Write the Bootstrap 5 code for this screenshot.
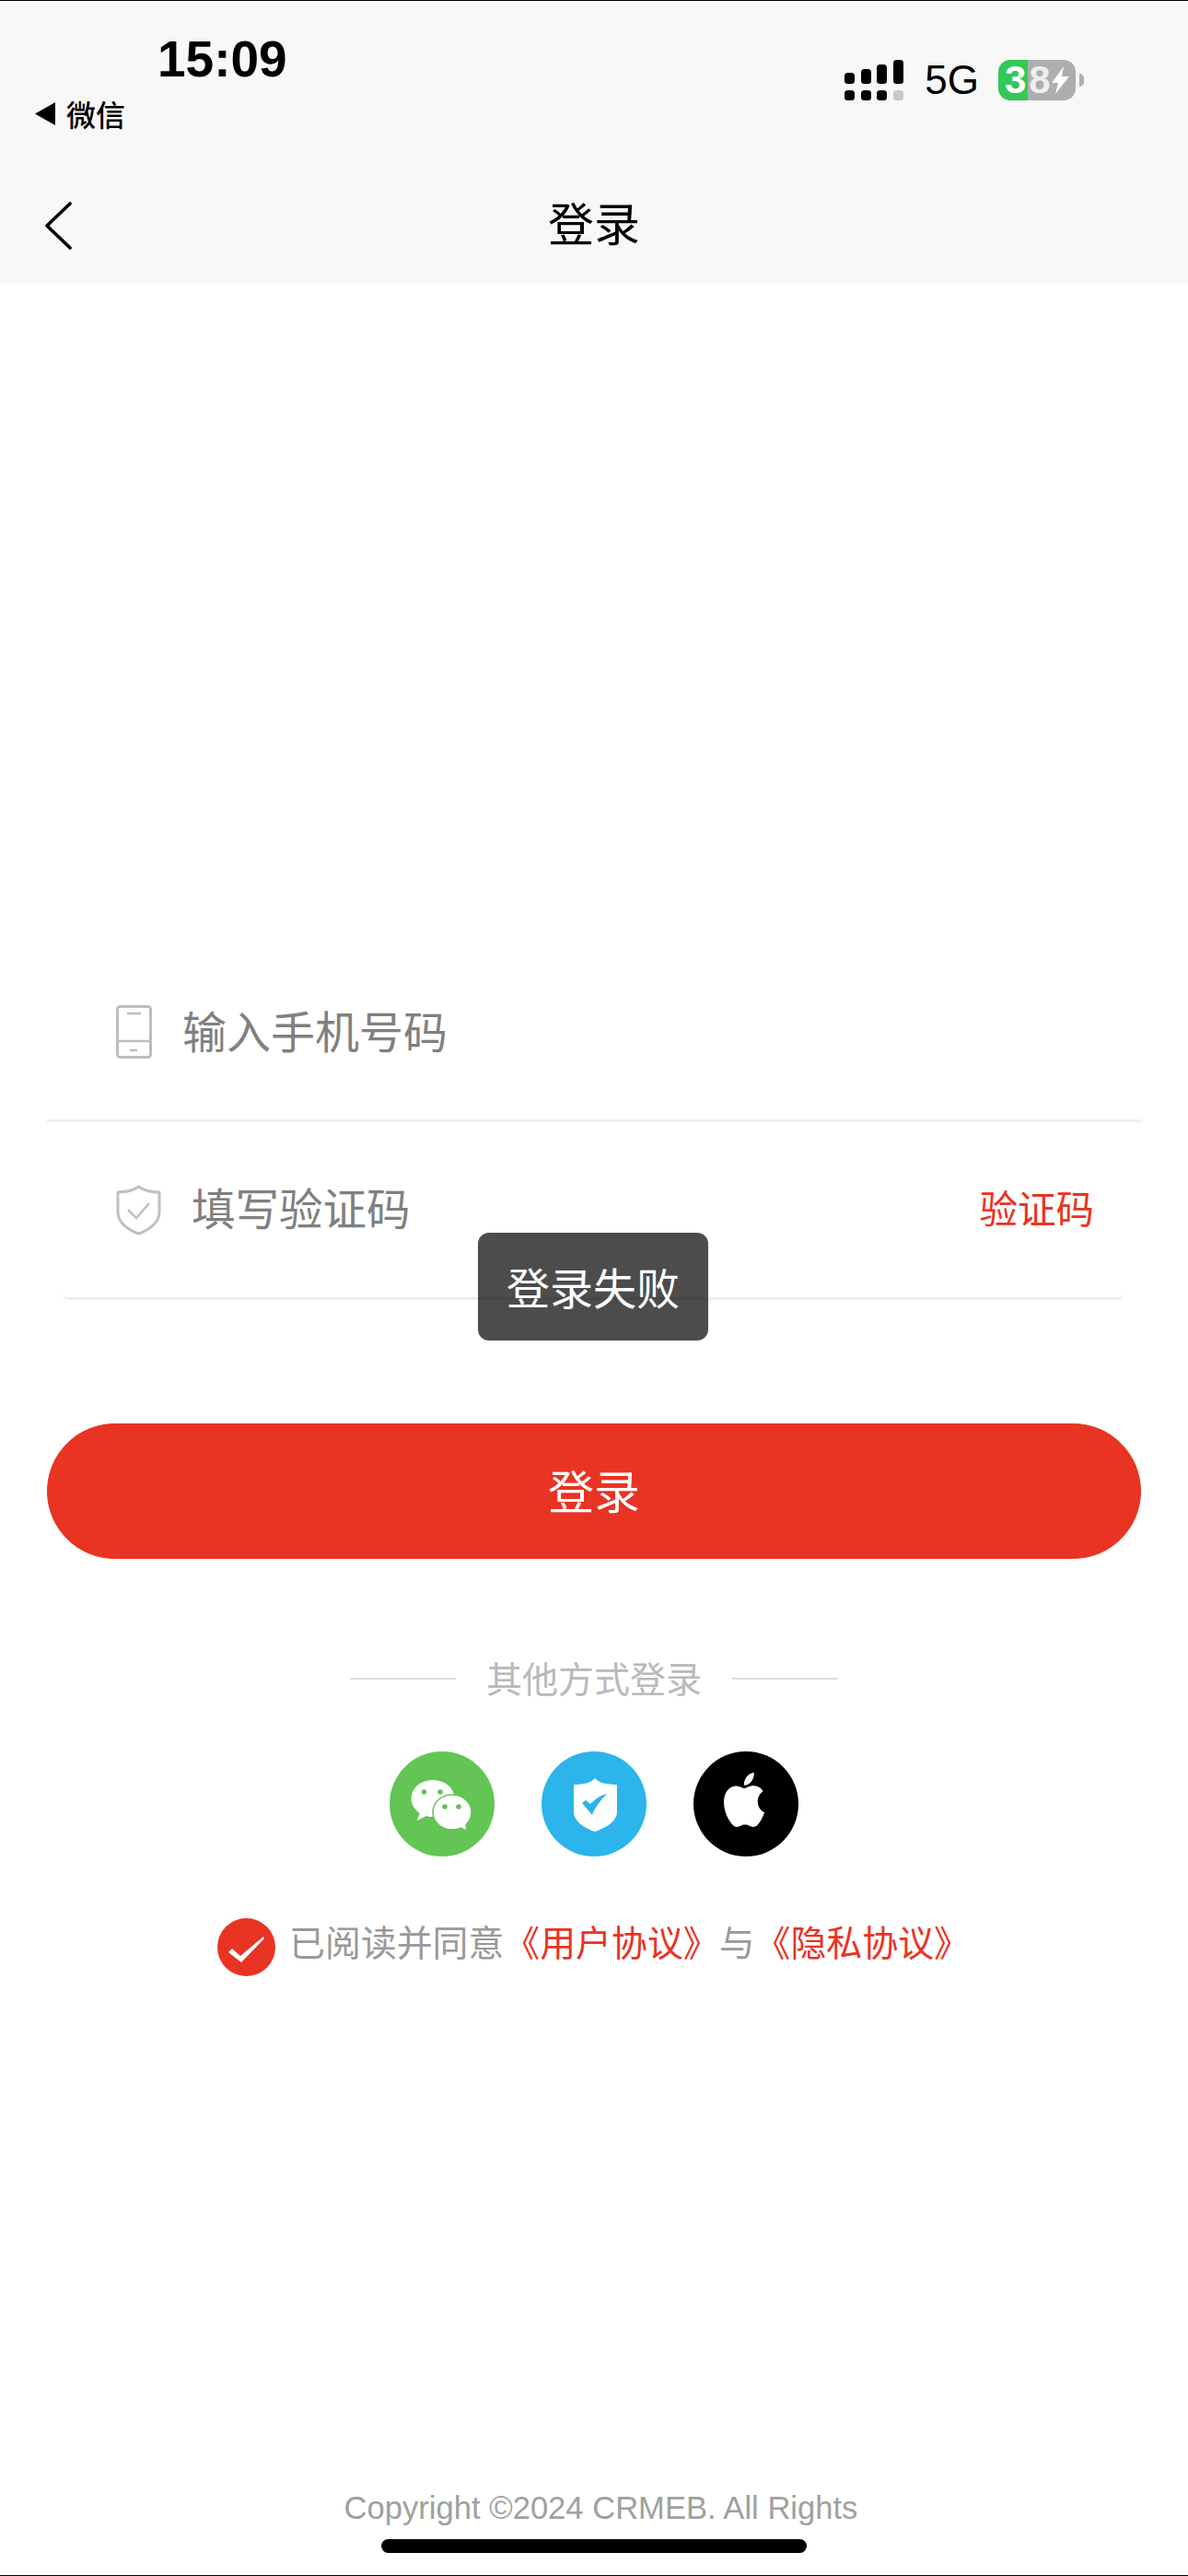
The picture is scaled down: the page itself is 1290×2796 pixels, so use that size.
<!DOCTYPE html>
<html lang="zh-CN">

<head>
    <meta charset="UTF-8">
    <meta name="viewport" content="width=device-width, initial-scale=1.0">
    <title>登录</title>
    <link href="https://cdn.jsdelivr.net/npm/bootstrap@5.3.0/dist/css/bootstrap.min.css" rel="stylesheet">
    <style>
        body {
            background-color: #fff;
            font-family: "Noto Sans CJK SC", "Liberation Sans", sans-serif;
        }

        .login-page {
            width: 1290px;
            height: 2796px;
            border-top: 1px solid #000;
            border-bottom: 1px solid #000;
        }

        .top-head {
            height: 308px;
            background-color: #f8f8f8;
        }

        /* status bar */
        .status-left {
            padding: 36px 0 0 38px;
        }

        .clock {
            margin-left: 133px;
            font: 700 55px/1 "Liberation Sans", sans-serif;
            color: #000;
        }

        .back-app {
            margin-top: 11px;
            font-size: 32px;
            line-height: 40px;
            font-weight: 500;
            color: #000;
        }

        .back-tri {
            width: 22px;
            height: 25px;
            margin-right: 12px;
        }

        .status-right {
            padding: 64px 113px 0 0;
        }

        .signal {
            width: 65px;
            height: 44px;
        }

        .net-text {
            margin: 0 21px 0 22px;
            font: 400 44px/44px "Liberation Sans", sans-serif;
            color: #000;
        }

        .battery-box {
            width: 84px;
            height: 44px;
            margin-right: 9px;
            padding-left: 7px;
            border-radius: 13px;
            background: linear-gradient(90deg, #34c85a 32px, #aeaeae 32px);
            font: 700 42px/44px "Liberation Sans", sans-serif;
            letter-spacing: 3px;
            color: #fff;
        }

        .battery-box::after {
            content: "";
            position: absolute;
            left: 88px;
            top: 15px;
            width: 5px;
            height: 14px;
            background-color: #aeaeae;
            border-radius: 0 5px 5px 0;
        }

        .battery-eight {
            color: #eee;
        }

        .battery-bolt {
            width: 20px;
            height: 30px;
            margin-left: -2px;
        }

        /* nav */
        .nav-line {
            height: 100px;
            margin-top: 47px;
            padding-left: 48px;
        }

        .nav-back {
            width: 30px;
            height: 52px;
            margin-top: 9px;
        }

        .nav-title {
            font-size: 50px;
            line-height: 60px;
            color: #000;
        }

        /* form */
        .login-form {
            margin: 774px 51px 0;
        }

        .field-row {
            height: 135px;
            padding: 0 0 58px 75px;
            border-bottom: 3px solid #efefef;
            color: #808080;
            font-size: 48px;
            line-height: 74px;
        }

        .field-code {
            height: 135px;
            margin: 58px 18px 0 16px;
            padding: 0 33px 58px 59px;
            border-bottom: 3px solid #efefef;
            border-radius: 0 0 8px 8px;
            color: #808080;
            font-size: 47.5px;
            line-height: 74px;
        }

        .field-text {
            margin: -7px 0 0 -2px;
        }

        .field-phone-ico {
            width: 39px;
            height: 58px;
            margin-right: 35px;
        }

        .field-shield-ico {
            width: 49px;
            height: 55px;
            margin-right: 35px;
        }

        .code-btn {
            margin-top: -7px;
            font-size: 41.5px;
            color: #e93323;
        }

        .submit-btn {
            height: 147px;
            margin-top: 134px;
            padding-bottom: 11px;
            background-color: #e93323;
            border-color: #e93323;
            color: #fff;
            font-size: 50px;
        }

        .other-title {
            height: 40px;
            margin-top: 110px;
            color: #b9b9b9;
            font-size: 39px;
            line-height: 40px;
            gap: 33px;
        }

        .other-title span {
            margin-top: -5px;
        }

        .other-title i {
            display: block;
            width: 115px;
            height: 2px;
            background-color: #dcdcdc;
        }

        .other-icons {
            margin-top: 59px;
            gap: 51px;
        }

        .round-ico {
            width: 114px;
            height: 114px;
            display: block;
        }

        .agree-row {
            margin-top: 67px;
            padding-left: 185px;
            font-size: 38.9px;
            line-height: 63px;
            color: #999;
        }

        .agree-text {
            margin: -14px 0 0 -2px;
        }

        .agree-check {
            width: 63px;
            height: 63px;
            margin-right: 17px;
        }

        .agree-link {
            color: #e93323;
        }

        /* bottom */
        .copy-text {
            margin: auto 0 0 15px;
            font: 400 34.6px/40px "Liberation Sans", sans-serif;
            color: #a0a0a0;
        }

        .home-bar {
            width: 462px;
            height: 15px;
            margin: 14px auto 24px;
            background-color: #000;
            border-radius: 8px;
        }

        .toast-msg {
            top: 1337px;
            left: 519px;
            width: 250px;
            height: 117px;
            background-color: rgba(0, 0, 0, .7);
            border-radius: 12px;
            color: #fff;
            font-size: 47px;
        }
    </style>
</head>

<body>
    <div class="login-page position-relative d-flex flex-column overflow-hidden">
        <!-- status bar + nav -->
        <header class="top-head">
            <div class="d-flex justify-content-between">
                <div class="status-left">
                    <div class="clock">15:09</div>
                    <div class="back-app d-flex align-items-center">
                        <svg class="back-tri" viewBox="0 0 22 25"><path d="M0 12.5 22 0v25z" fill="#000" /></svg>
                        微信
                    </div>
                </div>
                <div class="status-right d-flex align-items-start">
                    <svg class="signal" viewBox="0 0 65 44">
                        <rect x="0" y="14" width="11" height="12" rx="3.5" />
                        <rect x="18" y="10" width="11" height="16" rx="3.5" />
                        <rect x="35" y="5" width="11" height="21" rx="3.5" />
                        <rect x="53" y="0" width="11" height="26" rx="3.5" />
                        <rect x="0" y="33" width="11" height="11" rx="3.5" />
                        <rect x="18" y="33" width="11" height="11" rx="3.5" />
                        <rect x="35" y="33" width="11" height="11" rx="3.5" />
                        <rect x="53" y="33" width="11" height="11" rx="3.5" fill="#c8c8c8" />
                    </svg>
                    <span class="net-text">5G</span>
                    <div class="position-relative d-flex align-items-center battery-box">
                        <span>3</span><span class="battery-eight">8</span>
                        <svg class="battery-bolt" viewBox="0 0 20 30"><path d="M13 0 0 18h7L4 30 19 11h-8z" fill="#fff" /></svg>
                    </div>
                </div>
            </div>
            <div class="nav-line position-relative d-flex align-items-center">
                <svg class="nav-back" viewBox="0 0 30 52">
                    <path d="M28 2 3 26l25 24" fill="none" stroke="#000" stroke-width="3.6" stroke-linecap="round" stroke-linejoin="round" />
                </svg>
                <div class="nav-title position-absolute top-50 start-50 translate-middle">登录</div>
            </div>
        </header>

        <!-- login form -->
        <form class="login-form" onsubmit="return false">
            <div class="field-row d-flex align-items-center">
                <svg class="field-phone-ico" viewBox="0 0 39 58">
                    <rect x="1.5" y="1.5" width="36" height="55" rx="3" fill="none" stroke="#bdbdbd" stroke-width="3" />
                    <path d="M2 39h35M12 9h15M15 49h8" fill="none" stroke="#bdbdbd" stroke-width="2.4" />
                </svg>
                <span class="field-text">输入手机号码</span>
            </div>
            <div class="field-code d-flex align-items-center">
                <svg class="field-shield-ico" viewBox="0 0 49 55">
                    <path d="M24.5 2C19 6 11 8 2 8v22c0 11 11 19 22.500 23C36 49 47 41 47 30V8c-9 0-17-2-22.500-6z" fill="none" stroke="#c0c0c0" stroke-width="3" stroke-linejoin="round" />
                    <path d="m13 27 9 9 14-16" fill="none" stroke="#c0c0c0" stroke-width="2.6" />
                </svg>
                <span class="field-text">填写验证码</span>
                <span class="code-btn ms-auto">验证码</span>
            </div>

            <button type="submit" class="submit-btn btn rounded-pill w-100 d-block">登录</button>

            <div class="other-title d-flex align-items-center justify-content-center">
                <i></i><span>其他方式登录</span><i></i>
            </div>

            <div class="other-icons d-flex justify-content-center">
                <svg class="round-ico" viewBox="0 0 114 114">
                    <circle cx="57" cy="57" r="57" fill="#62c554" />
                    <ellipse cx="47" cy="51" rx="23.500" ry="20" fill="#fff" />
                    <path d="M33 66 30 75l10-5z" fill="#fff" />
                    <circle cx="37.500" cy="44" r="2.800" fill="#62c554" />
                    <circle cx="55" cy="44" r="2.800" fill="#62c554" />
                    <ellipse cx="68" cy="66" rx="21" ry="19" fill="#fff" stroke="#62c554" stroke-width="1.500" />
                    <path d="M75 81 83 85l-1-9z" fill="#fff" />
                    <circle cx="60" cy="60" r="2.800" fill="#62c554" />
                    <circle cx="75" cy="60" r="2.800" fill="#62c554" />
                </svg>
                <svg class="round-ico" viewBox="0 0 114 114">
                    <circle cx="57" cy="57" r="57" fill="#2cb4ec" />
                    <path d="M58 29c-4 5-12 7-23 7v30c0 10 13 18 23 21 10-3 24-11 24-21V36c-12 0-20-2-24-7z" fill="#fff" />
                    <path d="m44 56 4-3 5 4c5-5 12-10 18-11-7 7-13 15-16 23z" fill="#2cb4ec" />
                </svg>
                <svg class="round-ico" viewBox="0 0 114 114">
                    <circle cx="57" cy="57" r="57" fill="#000" />
                    <g transform="translate(28 23) scale(2.250 2.460)">
                        <path d="M12.152 6.896c-.948 0-2.415-1.078-3.960-1.040-2.040.027-3.910 1.183-4.961 3.014-2.117 3.675-.546 9.103 1.519 12.090 1.013 1.454 2.208 3.090 3.792 3.039 1.520-.065 2.090-.987 3.935-.987 1.831 0 2.350.987 3.960.948 1.637-.026 2.676-1.480 3.676-2.948 1.156-1.688 1.636-3.325 1.662-3.415-.039-.013-3.182-1.221-3.220-4.857-.026-3.040 2.480-4.494 2.597-4.559-1.429-2.090-3.623-2.324-4.390-2.376-2-.156-3.675 1.090-4.610 1.090zM15.530 3.830c.843-1.012 1.400-2.427 1.245-3.830-1.207.052-2.662.805-3.532 1.818-.780.896-1.454 2.338-1.273 3.714 1.338.104 2.715-.688 3.559-1.701" fill="#fff" />
                    </g>
                </svg>
            </div>

            <div class="agree-row d-flex align-items-center">
                <svg class="agree-check" viewBox="0 0 63 63">
                    <circle cx="31.500" cy="31.500" r="31.500" fill="#e93323" />
                    <path d="M12 37l4-4 9 8 25-21 1 2-25 26z" fill="#fff" />
                </svg>
                <span class="agree-text">已阅读并同意<span class="agree-link">《用户协议》</span>与<span class="agree-link">《隐私协议》</span></span>
            </div>
        </form>

        <div class="copy-text text-center">Copyright ©2024 CRMEB. All Rights</div>
        <div class="home-bar"></div>

        <!-- error toast -->
        <div class="toast-msg position-absolute d-flex align-items-center justify-content-center">登录失败</div>
    </div>

    <script src="https://cdn.jsdelivr.net/npm/bootstrap@5.3.0/dist/js/bootstrap.bundle.min.js"></script>
</body>

</html>
